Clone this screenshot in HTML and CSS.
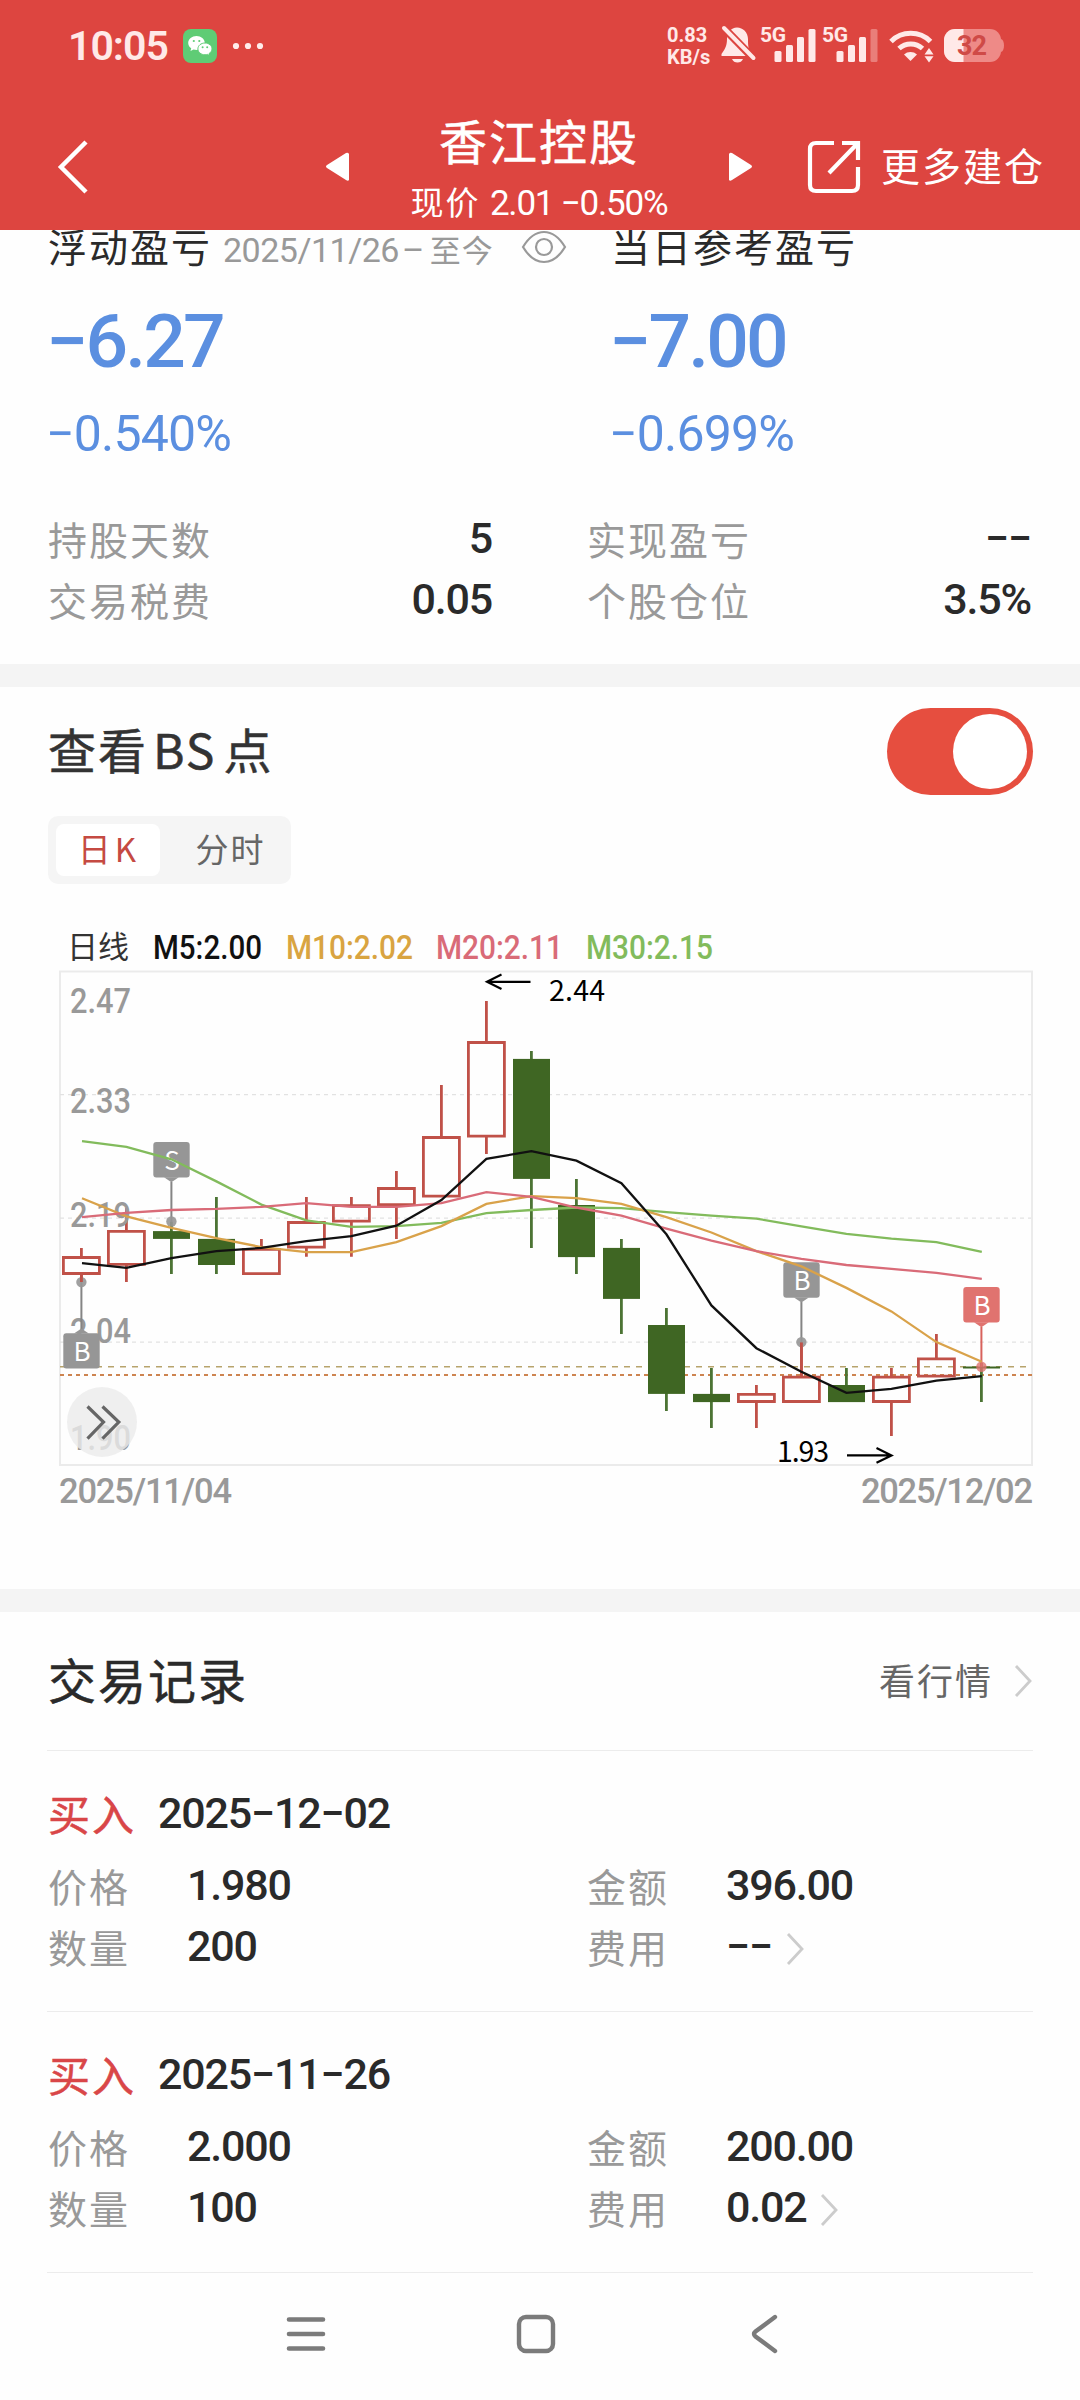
FILE: index.html
```
<!DOCTYPE html>
<html lang="zh-CN">
<head>
    <meta charset="UTF-8">
    <meta name="viewport" content="width=device-width, initial-scale=1.0">
    <title>香江控股</title>
    <link rel="stylesheet" href="styles.css">
</head>
<body>
    <header class="header">
        <div class="status">
            <span class="clock">10:05</span>
            <svg class="app-icon" width="34" height="34" viewBox="0 0 34 34">
                <rect width="34" height="34" rx="8" fill="#5fcc75"/>
                <path d="M13.500 7C9 7 5.200 10 5.200 14c0 2.200 1.200 4 3 5.300L7.500 22l3-1.500c1 .3 2 .4 3 .4 4.600 0 8.300-3 8.300-7S18 7 13.500 7z" fill="#fff"/>
                <path d="M22 14c-4 0-7.100 2.600-7.100 5.900s3.200 5.900 7.100 5.900c.9 0 1.700-.1 2.500-.4l2.300 1.200-.6-2.200c1.700-1.100 2.800-2.700 2.800-4.500 0-3.300-3.100-5.900-7-5.900z" fill="#fff" stroke="#5fcc75" stroke-width="1"/>
                <g fill="#5fcc75"><circle cx="10.800" cy="12" r="1.100"/><circle cx="16.300" cy="12" r="1.100"/><circle cx="19.600" cy="18.300" r="1"/><circle cx="24.200" cy="18.300" r="1"/></g>
            </svg>
            <svg class="dots" width="32" height="8" viewBox="0 0 32 8" fill="#ffeceb"><circle cx="4" cy="4" r="3.100"/><circle cx="16" cy="4" r="3.100"/><circle cx="28" cy="4" r="3.100"/></svg>
            <div class="speed"><span>0.83</span><span>KB/s</span></div>
            <svg class="status-icons" width="290" height="72" viewBox="720 10 290 72" fill="#ffe9e8">
                <!-- muted bell -->
                <path d="M737 27.500c-6 0-10 5-10 11 0 7-1.500 10-5.500 15.500v2H753c-5-6-5-10-5-17 0-6.500-5-11.500-11-11.500z"/>
                <path d="M732 59h11c-1 2.400-3 3.500-5.500 3.500S733 61.400 732 59z"/>
                <path d="M721 25l34 35" stroke="#dd4540" stroke-width="8"/>
                <path d="M724 28l29.500 30" stroke="#ffe9e8" stroke-width="4" stroke-linecap="round"/>
                <!-- signal -->
                <text x="760" y="41.500" textLength="26" class="net">5G</text>
                <rect x="774.500" y="51" width="7" height="11" rx="1.500"/><rect x="786" y="45" width="7" height="17" rx="1.500"/><rect x="797" y="37" width="7" height="25" rx="1.500"/><rect x="808.500" y="29" width="7" height="33" rx="1.500"/>
                <text x="822" y="41.500" textLength="26" class="net">5G</text>
                <rect x="836.500" y="51" width="7" height="11" rx="1.500"/><rect x="848" y="45" width="7" height="17" rx="1.500"/><rect x="859" y="37" width="7" height="25" rx="1.500"/><rect x="870.500" y="29" width="7" height="33" rx="1.500" opacity=".35"/>
                <!-- wifi -->
                <g fill="none" stroke="#ffe9e8" stroke-width="5"><path d="M891 41.500a28 28 0 0 1 39.500 0"/><path d="M899 48.500a17.500 17.500 0 0 1 23.500 0"/></g>
                <path d="M904 54.500a10 10 0 0 1 13 0l-6.500 6.500z"/>
                <path d="M929 48l4.500 6.500h-9zM929 62.500l4.500-6.300h-9z"/>
                <!-- battery -->
                <rect x="944" y="29" width="57" height="33" rx="11" fill="#ee8a87"/>
                <path d="M1001 39c4 1 4 12 0 13z" fill="#ee8a87"/>
                <path d="M955 29h8.500v33H955a11 11 0 0 1-11-11V40a11 11 0 0 1 11-11z"/>
                <text x="957" y="55" textLength="30" class="level">32</text>
            </svg>
        </div>
        <div class="titlebar">
            <svg class="back" width="32" height="56" viewBox="0 0 32 56"><path d="M30 3L5 28l25 25" fill="none" stroke="#fff" stroke-width="4.500"/></svg>
            <svg class="prev" width="26" height="32" viewBox="0 0 26 32"><path d="M24 3v26q-1 1.500-3 0L2 17q-2-1.500 0-3L21 2q2-1 3 1z" fill="#fff"/></svg>
            <div class="stock">
                <div class="stock-name">香江控股</div>
                <div class="stock-price">现价 <span>2.01 −0.50%</span></div>
            </div>
            <svg class="next" width="26" height="32" viewBox="0 0 26 32"><path d="M2 3v26q1 1.500 3 0l19-12q2-1.500 0-3L5 2Q3 1 2 3z" fill="#fff"/></svg>
            <svg class="share" width="56" height="56" viewBox="0 0 56 56" fill="none" stroke="#fff" stroke-width="4.200">
                <path d="M28 4H10q-6 0-6 6v36q0 6 6 6h36q6 0 6-6V28"/><path d="M36 4h16v17M51 5L23 34"/>
            </svg>
            <span class="more">更多建仓</span>
        </div>
    </header>

    <section class="summary">
        <div class="profit">
            <div class="profit-col">
                <div class="profit-title">浮动盈亏<span class="range">2025/11/26</span><span class="range-dash">–</span><span class="range-end">至今</span>
                    <svg class="eye" width="46" height="34" viewBox="0 0 46 34" fill="none" stroke="#999" stroke-width="2.200"><path d="M2 17C8 7 15 2 23 2s15 5 21 15c-6 10-13 15-21 15S8 27 2 17z"/><circle cx="23" cy="17" r="8"/></svg>
                </div>
                <div class="profit-value">−6.27</div>
                <div class="profit-rate">−0.540%</div>
            </div>
            <div class="profit-col">
                <div class="profit-title">当日参考盈亏</div>
                <div class="profit-value">−7.00</div>
                <div class="profit-rate">−0.699%</div>
            </div>
        </div>
        <div class="stats">
            <div class="stat"><span class="label">持股天数</span><span class="num">5</span></div>
            <div class="stat"><span class="label">实现盈亏</span><span class="num">−−</span></div>
            <div class="stat"><span class="label">交易税费</span><span class="num">0.05</span></div>
            <div class="stat"><span class="label">个股仓位</span><span class="num">3.5%</span></div>
        </div>
    </section>

    <section class="chart-section">
        <div class="chart-head">
            <h2>查看<span class="bs">BS</span>点</h2>
            <div class="toggle"><div class="knob"></div></div>
        </div>
        <div class="tabs"><span class="tab active">日<b>K</b></span><span class="tab">分时</span></div>
        <svg class="chart" width="1080" height="620" viewBox="0 900 1080 620">
            <!-- legend -->
            <text x="67" y="958" font-size="31" fill="#333" textLength="62" class="cn">日线</text>
            <g class="din" font-size="33">
                <text x="153" y="959" fill="#111" textLength="109" lengthAdjust="spacingAndGlyphs">M5:2.00</text>
                <text x="286" y="959" fill="#d9a441" textLength="127" lengthAdjust="spacingAndGlyphs">M10:2.02</text>
                <text x="436" y="959" fill="#d96b78" textLength="127" lengthAdjust="spacingAndGlyphs">M20:2.11</text>
                <text x="586" y="959" fill="#82bb5c" textLength="127" lengthAdjust="spacingAndGlyphs">M30:2.15</text>
            </g>
            <!-- frame and grid -->
            <rect x="60" y="971.500" width="972" height="493.500" fill="none" stroke="#ebebeb" stroke-width="2"/>
            <g stroke="#e2e2e2" stroke-width="1.300" stroke-dasharray="4 4"><path d="M60 1094.600H1031M60 1218.200H1031M60 1342.100H1031"/></g>
            <path d="M60 1366.800H1032" stroke="#b7a36c" stroke-width="1.600" stroke-dasharray="6 6"/>
            <path d="M60 1375H1032" stroke="#cd8450" stroke-width="2" stroke-dasharray="4 4"/>
            <!-- rising -->
            <g fill="none" stroke="#c05148" stroke-width="2.800">
                <path d="M63.400 1257.500h36v16h-36zM81.400 1247.900v9M81.400 1274v8.100"/>
                <path d="M108.400 1231.400h36v33h-36zM126.400 1207.900v23M126.400 1265v17.100"/>
                <path d="M243.400 1249.300h36v24.300h-36zM261.400 1238.900v10"/>
                <path d="M288.400 1222.500h36v24.700h-36zM306.400 1197.100v25M306.400 1248v8.800"/>
                <path d="M333.400 1205.700h36v15.400h-36zM351.400 1197.100v8M351.400 1222v34.800"/>
                <path d="M378.400 1188.500h36v16.200h-36zM396.400 1171.100v17M396.400 1205v33.900"/>
                <path d="M423.400 1137.500h36v58.600h-36zM441.400 1085v52"/>
                <path d="M468.400 1042.500h36v93.600h-36zM486.400 1001.100v41M486.400 1137v16.900"/>
                <path d="M738.400 1394.300h36v7.200h-36zM756.400 1385v9M756.400 1402v25.900"/>
                <path d="M783.400 1377.100h36v24.400h-36zM801.400 1342.100v34"/>
                <path d="M873.400 1377.100h36v24.400h-36zM891.400 1367.900v9M891.400 1402v34.100"/>
                <path d="M918.400 1358.900h36v17.200h-36zM936.400 1333.900v25"/>
            </g>
            <!-- falling -->
            <g stroke="#4c7434" stroke-width="2.800">
                <path d="M171.400 1221.800v52.100M216.400 1197.100v76.800M531.400 1051.100v196.800M576.400 1178.900v95M621.400 1238.900v95M666.400 1307.900v103.200M711.400 1367.900v60M846.400 1367.900v18M981.400 1363v39.100"/>
            </g>
            <g fill="#3f6623">
                <rect x="153" y="1231.100" width="37" height="7.800"/>
                <rect x="198" y="1238.900" width="37" height="26.100"/>
                <rect x="513" y="1058.900" width="37" height="120"/>
                <rect x="558" y="1205" width="37" height="52.100"/>
                <rect x="603" y="1247.900" width="37" height="51"/>
                <rect x="648" y="1325" width="37" height="68.900"/>
                <rect x="693" y="1393.900" width="37" height="8.200"/>
                <rect x="828" y="1385" width="37" height="17.100"/>
                <rect x="963" y="1366.500" width="37" height="2"/>
            </g>
            <!-- price axis -->
            <g class="din" font-size="35" fill="#999">
                <text x="70" y="1013" textLength="61" lengthAdjust="spacingAndGlyphs">2.47</text>
                <text x="70" y="1112.500" textLength="61" lengthAdjust="spacingAndGlyphs">2.33</text>
                <text x="70" y="1227" textLength="61" lengthAdjust="spacingAndGlyphs">2.19</text>
                <text x="70" y="1343" textLength="61" lengthAdjust="spacingAndGlyphs">2.04</text>
                <text x="70" y="1450" textLength="61" lengthAdjust="spacingAndGlyphs">1.90</text>
            </g>
            <!-- trade markers -->
            <g fill="#969696">
                <path d="M81.400 1282v47M171.400 1182v40M801.400 1302v40" stroke="#858585" stroke-width="2"/>
                <circle cx="81.400" cy="1282.100" r="5.200" opacity=".9"/><circle cx="171.400" cy="1221.500" r="5.200" opacity=".9"/><circle cx="801.400" cy="1342.100" r="5.200" opacity=".9"/>
                <rect x="63.300" y="1333.200" width="36.400" height="35.400" rx="3"/><path d="M74 1333.500l7.400-5 7.400 5z"/>
                <rect x="153.300" y="1142.100" width="36.400" height="35.400" rx="3"/><path d="M164 1177.300l7.400 5 7.400-5z"/>
                <rect x="783.300" y="1262.300" width="36.400" height="35.400" rx="3"/><path d="M794 1297.400l7.400 5 7.400-5z"/>
            </g>
            <g fill="#e0736f">
                <path d="M981.400 1327v40" stroke="#d8625c" stroke-width="2"/>
                <circle cx="981.400" cy="1366.800" r="5.200" opacity=".8"/>
                <rect x="963.300" y="1287.100" width="36.400" height="35.400" rx="3"/><path d="M974 1322.300l7.400 5 7.400-5z"/>
            </g>
            <g class="mark" font-size="26" fill="#fff" text-anchor="middle">
                <text x="82" y="1360.500">B</text>
                <text x="172" y="1169.500">S</text>
                <text x="802" y="1289.500">B</text>
                <text x="982" y="1314.500">B</text>
            </g>
            <!-- redraw the wicks over the dots -->
            <path d="M81.400 1274v8M801.400 1342.500v34" stroke="#c05148" stroke-width="2.800"/>
            <!-- moving averages -->
            <g fill="none" stroke-width="2.300">
                <polyline stroke="#82bb5c" points="82,1141.100 126.400,1146.800 171.400,1159.300 216.400,1181.400 261.400,1204.600 306.400,1220.400 351.400,1226.800 396.400,1226.100 441.400,1222.900 486.400,1213.200 531.400,1210 576.400,1207.500 621.400,1208.200 666.400,1212.100 711.400,1215.700 756.400,1218.600 801.400,1226.400 846.400,1233.900 891.400,1238.600 936.400,1242.100 981.800,1251.800"/>
                <polyline stroke="#d9a24a" points="82,1198.200 126.400,1216.400 171.400,1227.900 216.400,1238.200 261.400,1247.100 306.400,1252.100 351.400,1252.100 396.400,1242.100 441.400,1226.100 486.400,1203.900 531.400,1196.100 576.400,1198.200 621.400,1203.900 666.400,1217.100 711.400,1232.500 756.400,1251.100 801.400,1266.400 846.400,1287.900 891.400,1311.400 936.400,1342.100 981.800,1361.800"/>
                <polyline stroke="#d96b78" points="82,1217.100 126.400,1212.900 171.400,1210 216.400,1208.900 261.400,1206.800 306.400,1203.200 351.400,1206.800 396.400,1206.800 441.400,1203.200 486.400,1192.100 531.400,1196.800 576.400,1207.500 621.400,1215.700 666.400,1228.600 711.400,1240.700 756.400,1251.100 801.400,1258.900 846.400,1265 891.400,1268.900 936.400,1272.900 981.800,1278.900"/>
                <polyline stroke="#111" points="82,1263.200 126.400,1267.900 171.400,1258.200 216.400,1251.100 261.400,1247.900 306.400,1241.100 351.400,1236.100 396.400,1225.700 441.400,1200 486.400,1158.900 531.400,1151.100 576.400,1160.700 621.400,1183.200 666.400,1234.300 711.400,1305.400 756.400,1348.200 801.400,1371.800 846.400,1392.900 891.400,1388.900 936.400,1380.700 981.800,1376.100"/>
            </g>
            <!-- high / low -->
            <g fill="none" stroke="#000" stroke-width="2.200">
                <path d="M530.500 981.800H487M501.500 974.500L487 981.800l14.500 7.300"/>
                <path d="M847 1455.400h44M876.500 1448L891.500 1455.400l-15 7.300"/>
            </g>
            <g class="mark" font-size="28.500" fill="#000">
                <text x="549" y="1001" textLength="56">2.44</text>
                <text x="777" y="1462" textLength="52">1.93</text>
            </g>
            <!-- expand button -->
            <circle cx="102" cy="1422" r="35" fill="#ebebeb" opacity=".8"/>
            <path d="M87.500 1406.500L103.500 1422.100l-16 16.500M102.500 1406.500l16.300 15.600-16.300 16.500" fill="none" stroke="#666" stroke-width="3.200"/>
            <g class="din" font-size="34.500" fill="#999">
                <text x="59" y="1502.500" textLength="173" lengthAdjust="spacing">2025/11/04</text>
                <text x="861" y="1502.500" textLength="172" lengthAdjust="spacing">2025/12/02</text>
            </g>
        </svg>
    </section>

    <section class="records">
        <div class="records-head">
            <h2>交易记录</h2>
            <span class="quote">看行情</span>
            <svg class="arrow" width="20" height="34" viewBox="0 0 20 34"><path d="M3 2l14 15L3 32" fill="none" stroke="#ccc" stroke-width="2.800"/></svg>
        </div>
        <div class="record">
            <div class="record-title"><span class="side">买入</span><span class="num">2025−12−02</span></div>
            <div class="record-grid">
                <span class="label">价格</span><span class="num">1.980</span>
                <span class="label">金额</span><span class="num">396.00</span>
                <span class="label">数量</span><span class="num">200</span>
                <span class="label">费用</span><span class="num">−−<svg class="arrow" width="20" height="34" viewBox="0 0 20 34"><path d="M3 2l14 15L3 32" fill="none" stroke="#ccc" stroke-width="2.800"/></svg></span>
            </div>
        </div>
        <div class="record">
            <div class="record-title"><span class="side">买入</span><span class="num">2025−11−26</span></div>
            <div class="record-grid">
                <span class="label">价格</span><span class="num">2.000</span>
                <span class="label">金额</span><span class="num">200.00</span>
                <span class="label">数量</span><span class="num">100</span>
                <span class="label">费用</span><span class="num">0.02<svg class="arrow" width="20" height="34" viewBox="0 0 20 34"><path d="M3 2l14 15L3 32" fill="none" stroke="#ccc" stroke-width="2.800"/></svg></span>
            </div>
        </div>
    </section>

    <nav class="navbar">
        <svg width="44" height="44" viewBox="0 0 44 44"><path d="M5 7.500h34M5 22h34M5 36.500h34" stroke="#7b7b7b" stroke-width="4.600" stroke-linecap="round"/></svg>
        <svg width="44" height="44" viewBox="0 0 44 44"><rect x="5" y="5" width="34" height="34" rx="7" fill="none" stroke="#7b7b7b" stroke-width="4.400"/></svg>
        <svg width="44" height="44" viewBox="0 0 44 44"><path d="M31 5L11.500 19.500q-3 2.500 0 5L31 39" fill="none" stroke="#7b7b7b" stroke-width="4.400" stroke-linecap="round"/></svg>
    </nav>
</body>
</html>
```
FILE: styles.css
```
* {
    box-sizing: border-box;
}
body {
    margin: 0;
    width: 1080px;
    height: 2400px;
    overflow: hidden;
    background-color: #fefefe;
    color: #2a2a2a;
    font-family: "Noto Sans CJK SC", sans-serif;
}
svg {
    display: block;
    flex-shrink: 0;
}
h2 {
    margin: 0;
    font-size: 48px;
    font-weight: 400;
    letter-spacing: 2px;
    line-height: 60px;
    -webkit-text-stroke: 0.5px;
}
/* header */
.header {
    position: relative;
    z-index: 1;
    height: 230px;
    background-color: #dd4540;
    color: #fff;
}
.status {
    display: flex;
    align-items: center;
    height: 92px;
    padding-left: 68px;
}
.clock {
    width: 115px;
    color: #ffe9e8;
    font-family: Roboto, sans-serif;
    font-size: 41px;
    font-weight: 600;
    line-height: 44px;
    letter-spacing: -1px;
}
.dots {
    margin-left: 15px;
}
.speed {
    display: flex;
    flex-direction: column;
    width: 44px;
    margin-left: 403px;
    color: #ffe9e8;
    font-family: Roboto, sans-serif;
    font-size: 20px;
    font-weight: 700;
    line-height: 22px;
}
.status-icons {
    margin-left: 9px;
}
.net {
    font-family: Roboto, sans-serif;
    font-size: 21px;
    font-weight: 700;
}
.level {
    font-family: Roboto, sans-serif;
    font-size: 27px;
    font-weight: 700;
    fill: #cf4a47;
}
.titlebar {
    display: flex;
    align-items: center;
    height: 138px;
    padding-left: 56px;
}
.titlebar > svg {
    margin-top: 12px;
}
.prev {
    margin-left: 237px;
}
.stock {
    width: 376px;
    height: 138px;
    padding-top: 15px;
    text-align: center;
}
.stock-name {
    height: 64px;
    font-size: 48px;
    line-height: 64px;
    letter-spacing: 2px;
    -webkit-text-stroke: 0.5px;
}
.stock-price {
    height: 44px;
    font-size: 33px;
    line-height: 60px;
    letter-spacing: 2px;
}
.stock-price span {
    font-family: Roboto, sans-serif;
    font-size: 35px;
    letter-spacing: -1.2px;
}
.share {
    margin-left: 53px;
}
.more {
    margin-left: 19px;
    margin-top: 6px;
    font-size: 39px;
    line-height: 60px;
    letter-spacing: 2px;
}
/* summary */
.summary {
    display: flow-root;
    height: 434px;
    padding-left: 48px;
}
.profit {
    display: flex;
    margin-top: -14px;
}
.profit-col {
    width: 563px;
}
.profit-col + .profit-col {
    width: 420px;
}
.profit-title {
    display: flex;
    align-items: baseline;
    height: 56px;
    font-size: 39px;
    line-height: 58px;
    letter-spacing: 2px;
    white-space: nowrap;
}
.range,
.range-dash {
    color: #999;
    font-family: Roboto, sans-serif;
    font-size: 34px;
    letter-spacing: -0.5px;
}
.range {
    margin-left: 11px;
}
.range-dash {
    margin-left: 3px;
}
.range-end {
    margin-left: 6px;
    color: #999;
    font-size: 31px;
    letter-spacing: 1px;
}
.eye {
    align-self: center;
    margin-left: 27px;
    margin-top: 6px;
}
.profit-value,
.profit-rate {
    color: #5b8fe0;
    font-family: Roboto, sans-serif;
    font-weight: 500;
}
.profit-value {
    height: 80px;
    margin: 29px 0 0 -2px;
    font-size: 75px;
    line-height: 80px;
    letter-spacing: -2.8px;
}
.profit-rate {
    height: 60px;
    margin: 23px 0 0 -2px;
    font-size: 50px;
    font-weight: 450;
    line-height: 60px;
    letter-spacing: -0.8px;
}
.stats {
    display: grid;
    grid-template-columns: 444px 444px;
    column-gap: 95px;
    grid-auto-rows: 61px;
    margin-top: 43px;
}
.stat {
    display: flex;
    align-items: center;
    justify-content: space-between;
}
.label {
    color: #999;
    font-size: 39px;
    line-height: 60px;
    letter-spacing: 2px;
}
.num {
    font-family: Roboto, sans-serif;
    font-size: 43px;
    font-weight: 500;
    line-height: 60px;
    letter-spacing: -1.2px;
}
/* chart */
.chart-section {
    height: 925px;
    border-top: 23px solid #f4f4f4;
}
.chart-head {
    display: flex;
    align-items: center;
    justify-content: space-between;
    height: 113px;
    margin-top: 8px;
    padding: 0 47px 0 48px;
}
.chart-head h2 {
    padding-bottom: 8px;
    color: #333;
}
.bs {
    margin: 0 7px 0 5px;
}
.toggle {
    display: flex;
    justify-content: flex-end;
    width: 146px;
    height: 87px;
    padding: 6px;
    border-radius: 44px;
    background-color: #e64e3f;
}
.knob {
    width: 74px;
    height: 75px;
    border-radius: 50%;
    background-color: #fff;
}
.tabs {
    display: flex;
    width: 243px;
    height: 68px;
    margin: 8px 0 0 48px;
    padding: 8px;
    border-radius: 10px;
    background-color: #f5f5f5;
}
.tab {
    width: 123px;
    padding-left: 18px;
    color: #666;
    font-size: 33px;
    line-height: 48px;
    letter-spacing: 2px;
    text-align: center;
}
.tab.active {
    width: 104px;
    padding-left: 0;
    border-radius: 8px;
    background-color: #fff;
    color: #c54a42;
}
.tab b {
    margin-left: 2px;
    font-weight: 400;
}
.chart {
    margin-top: 16px;
}
.cn {
    font-family: "Noto Sans CJK SC", sans-serif;
}
.din {
    font-family: Roboto, sans-serif;
    font-weight: 500;
}
.mark {
    font-family: "Noto Sans CJK SC", sans-serif;
}
/* trade records */
.records {
    padding: 0 47px;
    border-top: 23px solid #f4f4f4;
}
.records-head {
    display: flex;
    align-items: center;
    height: 139px;
    padding-left: 1px;
    border-bottom: 1px solid #ececec;
}
.records-head h2 {
    flex: 1;
    padding-bottom: 6px;
}
.quote {
    margin-right: 20px;
    padding-bottom: 4px;
    color: #666;
    font-size: 36px;
    letter-spacing: 2px;
}
.record {
    height: 261px;
    padding: 32px 0 0 1px;
    border-bottom: 1px solid #ececec;
}
.record-title {
    display: flex;
    align-items: center;
    height: 60px;
}
.side {
    width: 110px;
    color: #d94648;
    font-size: 42px;
    line-height: 60px;
    letter-spacing: 2px;
    -webkit-text-stroke: 0.5px;
}
.record-grid {
    display: grid;
    grid-template-columns: 139px 400px 139px 300px;
    grid-auto-rows: 61px;
    align-items: center;
    margin-top: 11px;
}
.record-grid .num {
    display: flex;
    align-items: center;
}
.num .arrow {
    margin-left: 13px;
    margin-top: 6px;
}
/* system navigation */
.navbar {
    display: flex;
    justify-content: center;
    gap: 186px;
    padding: 39px 9px 0 0;
}
```
